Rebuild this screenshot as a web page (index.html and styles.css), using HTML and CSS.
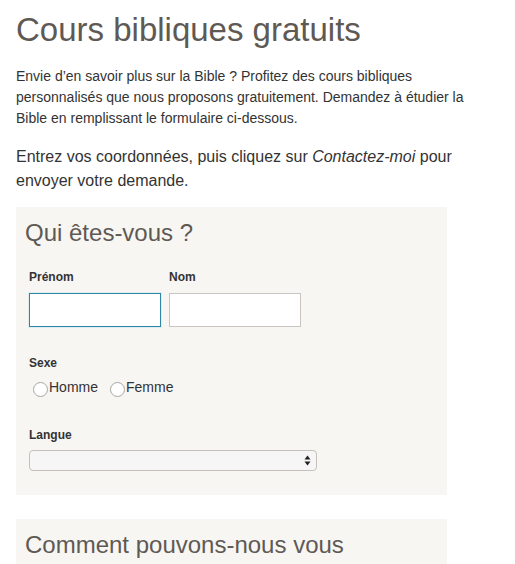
FILE: index.html
```html
<!DOCTYPE html>
<html lang="fr">
<head>
<meta charset="utf-8">
<title>Cours bibliques gratuits</title>
<link rel="stylesheet" href="styles.css">
</head>
<body>
<main class="page">
  <h1 class="title">Cours bibliques gratuits</h1>
  <p class="intro">Envie d’en savoir plus sur la Bible&nbsp;? Profitez des cours bibliques personnalisés que nous proposons gratuitement. Demandez à étudier la Bible en remplissant le formulaire ci-dessous.</p>
  <p class="lead">Entrez vos coordonnées, puis cliquez sur <em>Contactez-moi</em> pour envoyer votre demande.</p>

  <section class="panel">
    <h2 class="panel-title">Qui êtes-vous&nbsp;?</h2>
    <div class="fields">
      <div class="row">
        <div class="field">
          <label class="label" for="prenom">Prénom</label>
          <input class="text focus" id="prenom" type="text">
        </div>
        <div class="field">
          <label class="label" for="nom">Nom</label>
          <input class="text" id="nom" type="text">
        </div>
      </div>
      <div class="group sexe">
        <span class="label">Sexe</span>
        <div class="radios">
          <label class="radio"><span class="circle"></span>Homme</label>
          <label class="radio"><span class="circle"></span>Femme</label>
        </div>
      </div>
      <div class="group langue">
        <span class="label">Langue</span>
        <div class="select">
          <svg class="arrows" width="7" height="11" viewBox="0 0 7 11"><path d="M3.5 0.5 L6.5 4.5 L0.5 4.5 Z M3.5 10.5 L6.5 6.5 L0.5 6.5 Z" fill="#222"/></svg>
        </div>
      </div>
    </div>
  </section>

  <section class="panel second">
    <h2 class="panel-title">Comment pouvons-nous vous joindre&nbsp;?</h2>
  </section>
</main>
</body>
</html>
```
FILE: styles.css
```css
html, body {
  margin: 0;
  padding: 0;
  background: #fff;
}
body {
  font-family: "Liberation Sans", Arial, sans-serif;
  color: #333;
}
.page {
  box-sizing: border-box;
  width: 515px;
  padding: 10px 16px 40px 16px;
}
.title {
  margin: 0;
  font-size: 33px;
  line-height: 40px;
  font-weight: normal;
  color: #5f5954;
}
.intro {
  max-width: 470px;
  margin: 16px 0 0 0;
  font-size: 14px;
  line-height: 21px;
  color: #333;
}
.lead {
  max-width: 470px;
  margin: 16px 0 0 0;
  font-size: 16px;
  line-height: 24px;
  color: #333;
}
.panel {
  margin-top: 14px;
  width: 431px;
  box-sizing: border-box;
  background: #f7f6f3;
  padding: 11px 9px 24px 9px;
}
.panel-title {
  margin: 0;
  font-size: 24px;
  line-height: 29px;
  font-weight: normal;
  color: #5f5954;
}
.fields {
  padding: 0 4px;
  display: flex;
  flex-direction: column;
}
.row {
  display: flex;
  gap: 8px;
  margin-top: 23px;
}
.field {
  display: flex;
  flex-direction: column;
}
.label {
  display: block;
  font-size: 12px;
  font-weight: bold;
  line-height: 14px;
  color: #333;
}
.text {
  margin: 9px 0 0 0;
  box-sizing: border-box;
  width: 132px;
  height: 34px;
  background: #fff;
  border: 1px solid #c9c5c1;
  border-radius: 0;
  padding: 0 6px;
  outline: none;
}
.text.focus {
  border-color: #2b87a3;
  box-shadow: 0 0 0 1px #e2edf0;
}
.group.sexe {
  margin-top: 29px;
}
.radios {
  display: flex;
  gap: 12px;
  margin-top: 7px;
  padding-left: 4px;
}
.radio {
  display: flex;
  align-items: center;
  font-size: 14px;
  line-height: 17px;
  color: #333;
}
.circle {
  display: inline-block;
  box-sizing: border-box;
  width: 15px;
  height: 15px;
  border-radius: 50%;
  border: 1px solid #a9a6a3;
  background: #fff;
  margin-top: 5px;
  margin-right: 1px;
}
.group.langue {
  margin-top: 31px;
}
.select {
  margin-top: 8px;
  box-sizing: border-box;
  width: 288px;
  height: 21px;
  border: 1px solid #c4c0bc;
  border-radius: 4px;
  background: #f6f6f6;
  display: flex;
  align-items: center;
  justify-content: flex-end;
  padding-right: 5px;
}
.second {
  margin-top: 24px;
  padding-bottom: 10px;
}
```
